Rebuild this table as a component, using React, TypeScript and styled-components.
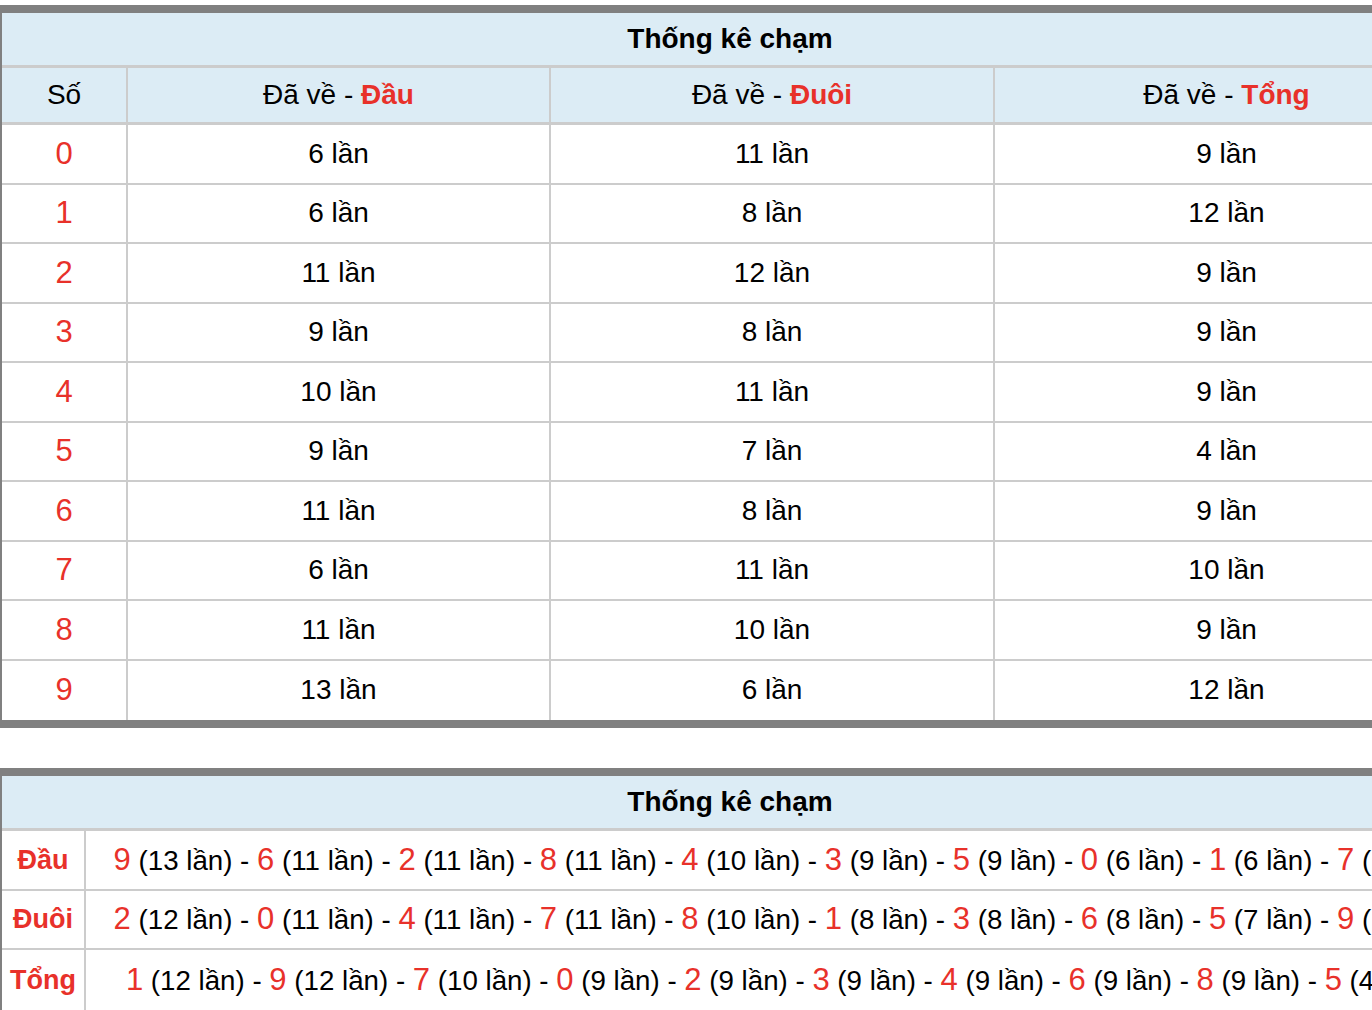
import React from "react";
import styled, { createGlobalStyle } from "styled-components";

const GlobalStyle = createGlobalStyle`
  body {
    margin: 0;
    background: #fff;
    color: #000;
    font-family: "Liberation Sans", Arial, sans-serif;
  }
`;

const RED = "#e8312a";
const BLUE = "#dcecf5";

const Page = styled.div`
  width: 1460px;
  padding-top: 5px;
  display: flex;
  flex-direction: column;
  gap: 40px;
`;

const Table = styled.table`
  width: 1460px;
  table-layout: fixed;
  border-collapse: separate;
  border-spacing: 0;
  border-top: 8px solid #808080;
  border-bottom: 8px solid #808080;
  border-left: 2px solid #808080;
  border-right: 2px solid #808080;
  font-size: 28px;
`;

const Title = styled.th`
  box-sizing: border-box;
  height: 55px;
  padding: 0;
  background: ${BLUE};
  border-bottom: 3px solid #ccc;
  font-weight: 700;
  font-size: 28px;
  text-align: center;
  vertical-align: middle;
`;

const HeadCell = styled.th<{ $last?: boolean }>`
  box-sizing: border-box;
  height: 57px;
  padding: 0;
  background: ${BLUE};
  border-bottom: 3px solid #ccc;
  border-right: ${(p) => (p.$last ? "none" : "2px solid #ccc")};
  font-weight: 400;
  text-align: center;
  vertical-align: middle;
`;

const Hot = styled.b`
  color: ${RED};
`;

const Cell = styled.td<{ $last?: boolean; $lastRow?: boolean }>`
  box-sizing: border-box;
  height: 59.5px;
  padding: 0;
  text-align: center;
  vertical-align: middle;
  white-space: nowrap;
  border-right: ${(p) => (p.$last ? "none" : "2px solid #ccc")};
  border-bottom: ${(p) => (p.$lastRow ? "none" : "2px solid #ccc")};
`;

const RankCell = styled(Cell)`
  padding-left: 10px;
  font-size: 27.7px;
`;

const Digit = styled.span<{ $size: number }>`
  color: ${RED};
  font-size: ${(p) => p.$size}px;
`;

const Label = styled.span`
  color: ${RED};
  font-weight: 700;
  font-size: 27px;
`;

const counts: [number, number, number][] = [
  [6, 11, 9],
  [6, 8, 12],
  [11, 12, 9],
  [9, 8, 9],
  [10, 11, 9],
  [9, 7, 4],
  [11, 8, 9],
  [6, 11, 10],
  [11, 10, 9],
  [13, 6, 12],
];

const ranking: { label: string; items: [number, number][] }[] = [
  {
    label: "Đầu",
    items: [[9, 13], [6, 11], [2, 11], [8, 11], [4, 10], [3, 9], [5, 9], [0, 6], [1, 6], [7, 6]],
  },
  {
    label: "Đuôi",
    items: [[2, 12], [0, 11], [4, 11], [7, 11], [8, 10], [1, 8], [3, 8], [6, 8], [5, 7], [9, 6]],
  },
  {
    label: "Tổng",
    items: [[1, 12], [9, 12], [7, 10], [0, 9], [2, 9], [3, 9], [4, 9], [6, 9], [8, 9], [5, 4]],
  },
];

const CountTable = () => (
  <Table>
    <colgroup>
      <col style={{ width: 126 }} />
      <col style={{ width: 423 }} />
      <col style={{ width: 444 }} />
      <col />
    </colgroup>
    <thead>
      <tr>
        <Title colSpan={4}>Thống kê chạm</Title>
      </tr>
      <tr>
        <HeadCell>Số</HeadCell>
        <HeadCell>
          Đã về - <Hot>Đầu</Hot>
        </HeadCell>
        <HeadCell>
          Đã về - <Hot>Đuôi</Hot>
        </HeadCell>
        <HeadCell $last>
          Đã về - <Hot>Tổng</Hot>
        </HeadCell>
      </tr>
    </thead>
    <tbody>
      {counts.map((row, i) => {
        const lastRow = i === counts.length - 1;
        return (
          <tr key={i}>
            <Cell $lastRow={lastRow}>
              <Digit $size={31}>{i}</Digit>
            </Cell>
            {row.map((n, j) => (
              <Cell key={j} $lastRow={lastRow} $last={j === 2}>
                {n} lần
              </Cell>
            ))}
          </tr>
        );
      })}
    </tbody>
  </Table>
);

const RankTable = () => (
  <Table>
    <colgroup>
      <col style={{ width: 84 }} />
      <col />
    </colgroup>
    <thead>
      <tr>
        <Title colSpan={2}>Thống kê chạm</Title>
      </tr>
    </thead>
    <tbody>
      {ranking.map((r, i) => {
        const lastRow = i === ranking.length - 1;
        return (
          <tr key={r.label}>
            <Cell $lastRow={lastRow}>
              <Label>{r.label}</Label>
            </Cell>
            <RankCell $lastRow={lastRow} $last>
              {r.items.map(([d, n], k) => (
                <React.Fragment key={k}>
                  <Digit $size={31}>{d}</Digit> ({n} lần)
                  {k < r.items.length - 1 ? " - " : ""}
                </React.Fragment>
              ))}
            </RankCell>
          </tr>
        );
      })}
    </tbody>
  </Table>
);

export default function App() {
  return (
    <>
      <GlobalStyle />
      <Page>
        <CountTable />
        <RankTable />
      </Page>
    </>
  );
}
